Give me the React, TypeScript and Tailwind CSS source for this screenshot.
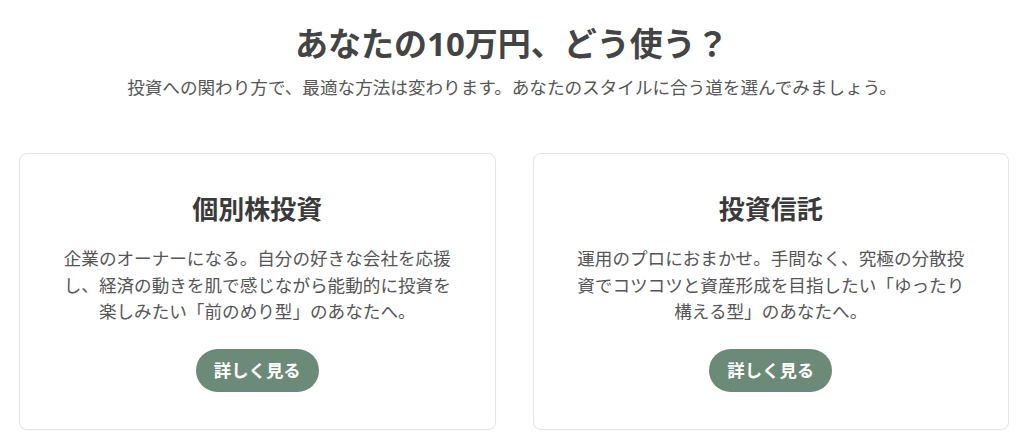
const cards = [
  {
    title: "個別株投資",
    body: "企業のオーナーになる。自分の好きな会社を応援し、経済の動きを肌で感じながら能動的に投資を楽しみたい「前のめり型」のあなたへ。",
  },
  {
    title: "投資信託",
    body: "運用のプロにおまかせ。手間なく、究極の分散投資でコツコツと資産形成を目指したい「ゆったり構える型」のあなたへ。",
  },
];

function Card({ title, body }: { title: string; body: string }) {
  return (
    <div className="flex flex-col items-center bg-white border border-[#e4e4e7] rounded-[8px] px-10 pt-10 pb-[37px] shadow-[0_1px_2px_rgba(0,0,0,0.03)]">
      <h2 className="text-[26px] font-bold leading-[1.2] text-[#3a3a3a] mb-5">{title}</h2>
      <p className="text-[17.6px] leading-[1.5] text-[#555] text-center">{body}</p>
      <button className="mt-[25px] bg-[#6b8a77] text-white font-bold text-[17.4px] leading-[21px] px-[18px] py-[11px] rounded-full">
        詳しく見る
      </button>
    </div>
  );
}

export default function App() {
  return (
    <div
      className="min-h-[439px] bg-white pt-[22px]"
      style={{ fontFamily: '"Noto Sans", "Noto Sans CJK JP", sans-serif' }}
    >
      <div className="flex flex-col items-center">
        <h1 className="text-[33px] font-bold leading-[1.36] text-[#444]">あなたの10万円、どう使う？</h1>
        <p className="mt-[6px] text-[17.6px] leading-[1.6] text-[#555]">
          投資への関わり方で、最適な方法は変わります。あなたのスタイルに合う道を選んでみましょう。
        </p>
      </div>
      <div className="grid grid-cols-2 gap-[37px] w-[990px] ml-[19px] mt-[52px]">
        {cards.map((c) => (
          <Card key={c.title} title={c.title} body={c.body} />
        ))}
      </div>
    </div>
  );
}
